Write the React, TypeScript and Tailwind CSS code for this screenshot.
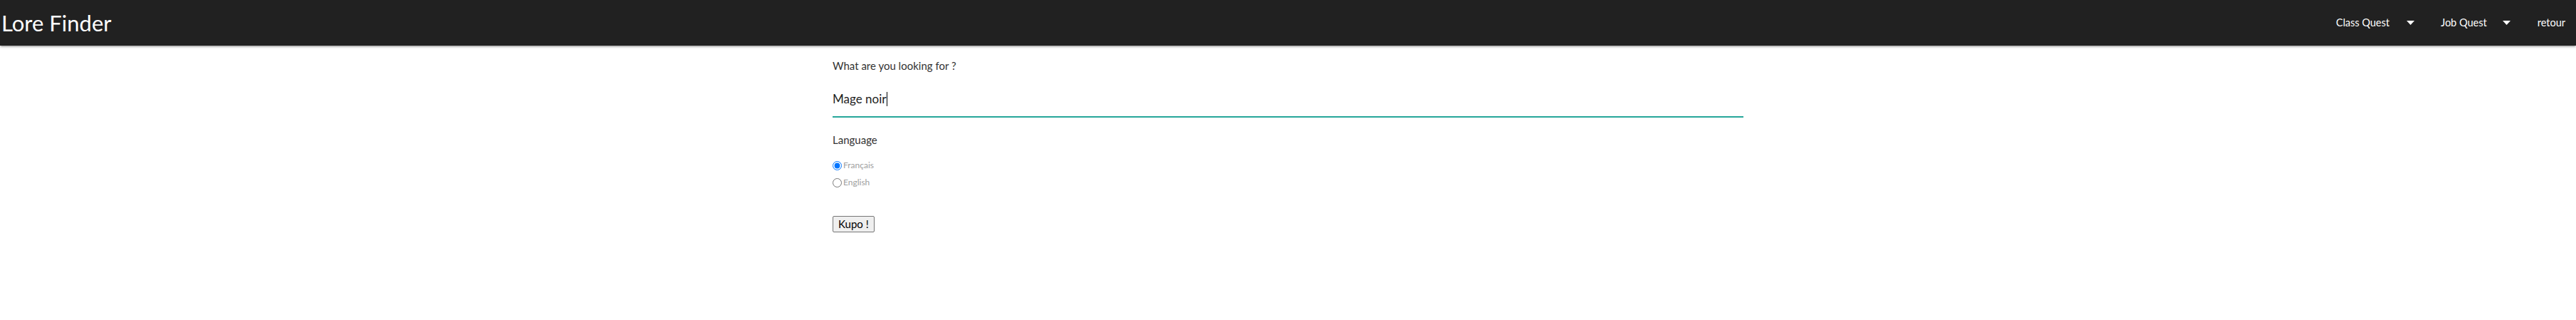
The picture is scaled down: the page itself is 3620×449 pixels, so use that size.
import React from "react";

function Caret() {
  return (
    <svg width="11" height="6" viewBox="0 0 11 6" className="block">
      <path d="M0 0 L11 0 L5.5 6 Z" fill="#ffffff" />
    </svg>
  );
}

export default function App() {
  return (
    <div className="min-h-[449px] bg-white font-['Lato',sans-serif]">
      <nav className="relative z-10 flex h-16 items-center justify-between bg-[#212121] text-white shadow-[0_2px_2px_0_rgba(0,0,0,0.14),0_3px_1px_-2px_rgba(0,0,0,0.12),0_1px_5px_0_rgba(0,0,0,0.2)]">
        <span className="pl-[2px] text-[31px] leading-none">Lore Finder</span>
        <ul className="flex items-center pr-[15px] text-[14.5px]">
          <li className="flex items-center">
            <span>Class Quest</span>
            <span className="ml-[24px]"><Caret /></span>
          </li>
          <li className="ml-[37px] flex items-center">
            <span>Job Quest</span>
            <span className="ml-[22px]"><Caret /></span>
          </li>
          <li className="ml-[38px]">retour</li>
        </ul>
      </nav>
      <main className="mx-auto w-[1280px]">
        <label className="mt-[19px] block text-[15px] leading-[18px] text-[#333]">What are you looking for ?</label>
        <div className="mt-[24px] border-b-2 border-[#26a69a] pb-[12px]">
          <span className="text-[17px] leading-[22px] text-[#222]">Mage noir</span>
          <span className="ml-[1px] inline-block h-[20px] w-[1px] translate-y-[4px] bg-black"></span>
        </div>
        <div className="mt-[22px] text-[15px] leading-[18px] text-[#333]">Language</div>
        <div className="mt-[18px] flex flex-col gap-[6px] text-[12px] text-[#9e9e9e]">
          <label className="flex items-center gap-[2px]">
            <input type="radio" name="lang" defaultChecked className="m-0 h-[13px] w-[13px] accent-[#0075ff]" />
            <span>Français</span>
          </label>
          <label className="flex items-center gap-[2px]">
            <input type="radio" name="lang" className="m-0 h-[13px] w-[13px]" />
            <span>English</span>
          </label>
        </div>
        <button className="mt-[38px] rounded-[2px] border border-[#767676] bg-[#efefef] px-[7px] text-[15px] leading-[21px] text-black">
          Kupo !
        </button>
      </main>
    </div>
  );
}
